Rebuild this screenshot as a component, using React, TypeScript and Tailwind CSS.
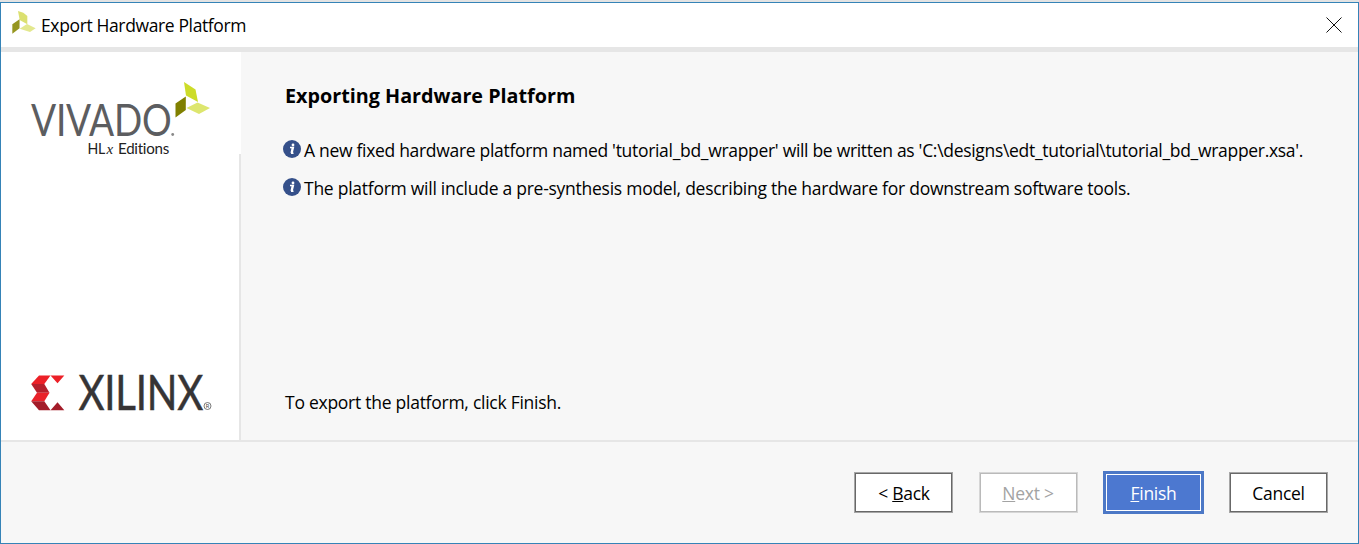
import React from "react";

function LeafMark({ className }: { className: string }) {
  return (
    <svg viewBox="0 0 36 36" className={className} aria-hidden="true">
      <path d="M9 0 L17 2.5 L23 7.5 L23 20 L11.5 13.5 Z" fill="#dbe070" />
      <path d="M0.5 20 L11.3 12.5 L11.3 26 L0.5 34 Z" fill="#969620" />
      <path d="M11.5 26.5 L22.5 19.5 L35.5 26 L27 31.5 Z" fill="#e3e88e" />
    </svg>
  );
}

function VivadoLogo() {
  return (
    <svg viewBox="0 0 190 70" className="block h-[70px] w-[190px] overflow-visible">
      <text x="5" y="65.5" textLength="140.5" lengthAdjust="spacingAndGlyphs" fontSize="43.5" fill="#5c5d60" fontFamily="Lato, sans-serif">VIVADO</text>
      <circle cx="146.7" cy="64.5" r="1.4" fill="#888" />
      <g transform="translate(149 12)">
        <path d="M9 0 L20.5 7.5 L23 20 L11 13.5 Z" fill="#cddc29" />
        <path d="M0.5 21.5 L10.8 14.5 V28 L0.5 35.5 Z" fill="#808000" />
        <path d="M11.5 26 L22.5 20.5 L35 26 L24 32 Z" fill="#dde66e" />
      </g>
    </svg>
  );
}

function Editions() {
  return (
    <svg viewBox="0 0 90 20" className="ml-[60px] block h-5 w-[90px] overflow-visible" fill="#222">
      <text x="1.5" y="13.5" fontSize="14.5" textLength="17.5" lengthAdjust="spacingAndGlyphs" fontFamily="Lato, sans-serif">HL</text>
      <text x="20.5" y="13.5" fontSize="15" fontStyle="italic" fontFamily="Liberation Serif, serif">x</text>
      <text x="32" y="13.5" fontSize="14.5" textLength="51" lengthAdjust="spacingAndGlyphs" fontFamily="Lato, sans-serif">Editions</text>
    </svg>
  );
}

function XilinxLogo() {
  return (
    <svg viewBox="0 0 184 36" className="block h-9 w-[184px] overflow-visible">
      <path d="M9 0.5 H20.5 L14.3 9 H1.2 Z" fill="#ec2027" />
      <path d="M1.2 9 H14.3 L19.5 17.8 H7 Z" fill="#b51f2b" />
      <path d="M7 17.8 H19.5 L14.3 26.3 H1.2 Z" fill="#e9222a" />
      <path d="M1.2 26.3 H14.3 L20.5 35.3 H9 Z" fill="#a31c29" />
      <path d="M20.5 0.5 H34.3 L27.5 8.3 Z" fill="#ec2027" />
      <path d="M20.5 35.3 L27.5 27.3 L34.3 35.3 Z" fill="#a31c29" />
      <text x="48.5" y="35.3" textLength="124.5" lengthAdjust="spacingAndGlyphs" fontSize="47.5" fill="#363435" stroke="#363435" strokeWidth="0.5" fontFamily="Lato, sans-serif">XILINX</text>
      <circle cx="177.5" cy="31" r="3.5" fill="none" stroke="#444" strokeWidth="0.7" />
      <text x="175.7" y="33.2" fontSize="5.5" fill="#444" fontFamily="Roboto, sans-serif">R</text>
    </svg>
  );
}

function InfoIcon() {
  return (
    <svg viewBox="0 0 18 18" className="-mt-1 block size-[18px] shrink-0" aria-hidden="true">
      <circle cx="9" cy="9" r="9" fill="#35508a" />
      <circle cx="10" cy="5" r="1.4" fill="#fff" />
      <path d="M7 7.5 H10.3 L8.9 13.2 H10.5 M9.5 7.5 L8.3 13" fill="none" stroke="#fff" strokeWidth="1.6" />
    </svg>
  );
}

export default function App() {
  return (
    <div className="h-[544px] w-[1359px] bg-[#e3e3e3] pt-[2px] font-['Open_Sans',sans-serif] text-[17.5px] leading-6 tracking-[-0.26px] text-black">
      <div className="flex h-[542px] flex-col border border-[#3583b7] bg-[#f7f7f7]">
        <header className="flex h-[49px] shrink-0 items-center border-b-[5px] border-[#e6e6e6] bg-white pr-4 pl-[11px]">
          <LeafMark className="-mt-1 block size-6" />
          <h1 className="ml-[5px] tracking-[-0.37px] whitespace-nowrap">Export Hardware Platform</h1>
          <svg viewBox="0 0 16 16" className="-mt-px ml-auto block size-4" aria-label="Close">
            <path d="M0.5 0.5 L15.5 15.5 M15.5 0.5 L0.5 15.5" stroke="#111" strokeWidth="1" />
          </svg>
        </header>
        <main className="flex h-[390px] shrink-0 border-b-2 border-[#e6e6e6]">
          <aside className="flex w-[240px] shrink-0 bg-white">
            <div className="flex grow flex-col pt-[18px] pl-[25px]">
              <VivadoLogo />
              <Editions />
              <div className="mt-auto mb-[29px] ml-1">
                <XilinxLogo />
              </div>
            </div>
            <div className="mt-[102px] w-[2px] shrink-0 bg-[#e6e6e6]" />
          </aside>
          <section className="flex grow flex-col pt-8 pl-11 whitespace-nowrap">
            <h2 className="text-[19.75px] font-bold tracking-normal">Exporting Hardware Platform</h2>
            <p className="mt-[31px] -ml-[2px] flex h-6 items-center gap-[3px]">
              <InfoIcon />
              <span className="-mt-[2px] tracking-[-0.305px]">A new fixed hardware platform named 'tutorial_bd_wrapper' will be written as 'C:\designs\edt_tutorial\tutorial_bd_wrapper.xsa'.</span>
            </p>
            <p className="mt-[14px] -ml-[2px] flex h-6 items-center gap-[3px]">
              <InfoIcon />
              <span className="-mt-[2px]">The platform will include a pre-synthesis model, describing the hardware for downstream software tools.</span>
            </p>
            <p className="mt-auto mb-[26px]">To export the platform, click Finish.</p>
          </section>
        </main>
        <footer className="flex grow items-center justify-end gap-[25px] pr-[30px]">
          <button className="mr-px h-[41px] w-[99px] border border-[#a6a6a6] bg-white pt-px pl-px inset-ring inset-ring-[#686868]">&lt; <u>B</u>ack</button>
          <button className="h-[41px] w-[99px] border border-[#d6d6d6] bg-white pt-px pr-px text-[#a3a3a3] inset-ring inset-ring-[#bababa]"><u>N</u>ext &gt;</button>
          <button className="h-[43px] w-[101px] border-[3px] border-[#4c78c6] bg-white p-px text-white"><span className="flex h-full items-center justify-center bg-[#4c78d0] pt-px"><u>F</u>inish</span></button>
          <button className="h-[41px] w-[99px] border border-[#a6a6a6] bg-white pt-px inset-ring inset-ring-[#686868]">Cancel</button>
        </footer>
      </div>
    </div>
  );
}
